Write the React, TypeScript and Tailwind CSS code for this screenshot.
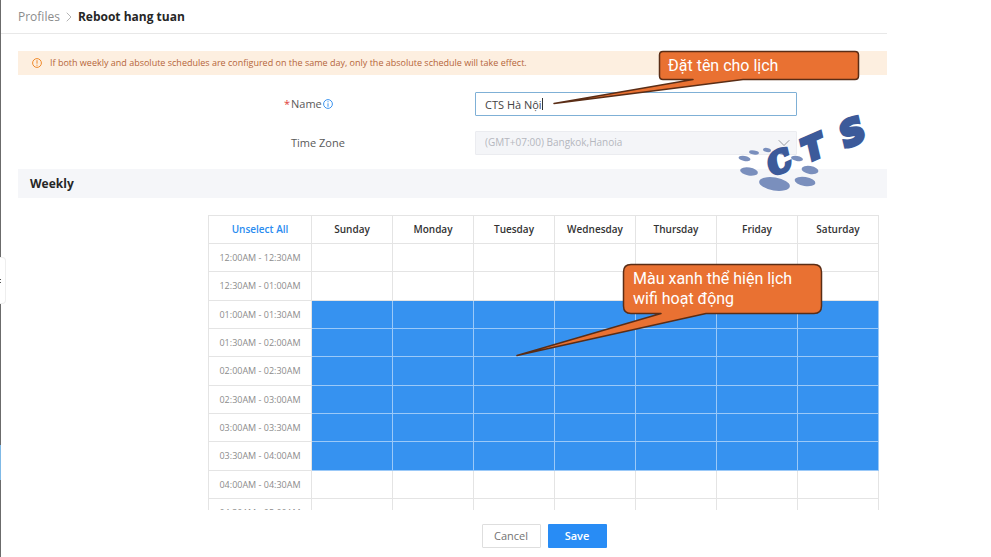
import { ChevronDown, ChevronRight } from "lucide-react";

const days = ["Sunday", "Monday", "Tuesday", "Wednesday", "Thursday", "Friday", "Saturday"];

const slots = [
  { label: "12:00AM - 12:30AM", on: false },
  { label: "12:30AM - 01:00AM", on: false },
  { label: "01:00AM - 01:30AM", on: true },
  { label: "01:30AM - 02:00AM", on: true },
  { label: "02:00AM - 02:30AM", on: true },
  { label: "02:30AM - 03:00AM", on: true },
  { label: "03:00AM - 03:30AM", on: true },
  { label: "03:30AM - 04:00AM", on: true },
  { label: "04:00AM - 04:30AM", on: false },
  { label: "04:30AM - 05:00AM", on: false },
];

function SideRail() {
  return (
    <aside className="relative w-px shrink-0 bg-[#6b6b6b]">
      <button
        aria-label="Collapse menu"
        className="absolute left-0 top-[257px] flex h-[47px] w-[6px] flex-col items-start justify-center gap-[2px] rounded-r-[4px] border border-l-0 border-[#eeeeee] bg-white"
      >
        <span className="h-px w-px bg-[#555555]" />
        <span className="h-px w-px bg-[#555555]" />
      </button>
      <span className="absolute left-0 top-[445px] h-[35px] w-px bg-[#7fb9e6]" />
    </aside>
  );
}

function CalloutName() {
  return (
    <div className="absolute left-[553px] top-[50px] h-[56px] w-[307px]">
      <svg className="absolute inset-0" width="307" height="56" aria-hidden="true">
        <path
          d="M110 1.500H302Q305.500 1.500 305.500 5V26Q305.500 29.500 302 29.500H190L1 53.500L140 29.500H110Q106.500 29.500 106.500 26V5Q106.500 1.500 110 1.500Z"
          fill="#e97132"
          stroke="#5a2d16"
          strokeWidth="1.500"
          strokeLinejoin="round"
        />
      </svg>
      <p className="relative ml-[115px] mt-[6px] font-['Roboto',sans-serif] text-base leading-5 text-white">
        Đặt tên cho lịch
      </p>
    </div>
  );
}

function CalloutWifi() {
  return (
    <div className="absolute left-[516px] top-[263px] h-[94px] w-[307px]">
      <svg className="absolute inset-0" width="307" height="94" aria-hidden="true">
        <path
          d="M115 1.500H298Q305.500 1.500 305.500 9V43Q305.500 50.500 298 50.500H190L1 92.500L145 50.500H115Q107.500 50.500 107.500 43V9Q107.500 1.500 115 1.500Z"
          fill="#e97132"
          stroke="#5a2d16"
          strokeWidth="1.500"
          strokeLinejoin="round"
        />
      </svg>
      <p className="relative ml-[117px] mt-[6px] font-['Roboto',sans-serif] text-base leading-5 text-white">
        Màu xanh thể hiện lịch
        <br />
        wifi hoạt động
      </p>
    </div>
  );
}

function CtsLogo() {
  return (
    <svg
      className="absolute left-[735px] top-[100px]"
      width="156"
      height="94"
      viewBox="0 -10 156 94"
      role="img"
      aria-label="CTS"
    >
      <g fill="#7a8fbd">
        <ellipse cx="39.500" cy="74" rx="15.500" ry="6.500" transform="rotate(9 39.500 74)" />
        <ellipse cx="14" cy="61.500" rx="9" ry="4" transform="rotate(9 14 61.500)" />
        <ellipse cx="9.500" cy="48.500" rx="6" ry="2.500" transform="rotate(9 9.500 48.500)" />
        <ellipse cx="19" cy="42.500" rx="5" ry="2" transform="rotate(9 19 42.500)" />
        <ellipse cx="32" cy="40" rx="4" ry="2" transform="rotate(9 32 40)" />
        <ellipse cx="47" cy="42.500" rx="5" ry="2" transform="rotate(9 47 42.500)" />
        <ellipse cx="62" cy="48.500" rx="6" ry="2.500" transform="rotate(9 62 48.500)" />
        <ellipse cx="75" cy="60" rx="8.500" ry="4" transform="rotate(9 75 60)" />
        <ellipse cx="70" cy="71.500" rx="10.500" ry="4.500" transform="rotate(9 70 71.500)" />
      </g>
      <g
        fill="#3c5a9a"
        stroke="#3c5a9a"
        strokeWidth="4"
        fontFamily="'DejaVu Sans', sans-serif"
        fontWeight="700"
        fontStyle="italic"
        fontSize="29"
      >
        <text x="38" y="66" fontFamily="'DejaVu Serif', serif" transform="rotate(-24 38 66)">C</text>
        <text x="73" y="52" fontSize="31" transform="rotate(-24 73 52)">T</text>
        <text x="111" y="38" fontSize="34" transform="rotate(-24 111 38)">S</text>
      </g>
    </svg>
  );
}

export default function App() {
  return (
    <div className="relative flex h-screen overflow-hidden bg-white font-['Open_Sans',sans-serif] text-xs">
      <SideRail />
      <div className="mr-[104px] flex min-w-0 flex-1 flex-col">
        <nav className="flex h-[34px] shrink-0 items-center gap-px border-b border-[#e8e8e8] pl-[17px]">
          <a href="#profiles" className="text-[#8c8c8c]">Profiles</a>
          <ChevronRight className="size-4 text-[#b5b5b5]" strokeWidth={1.5} />
          <h1 className="font-bold text-[#262626]">Reboot hang tuan</h1>
        </nav>

        <main className="flex min-h-0 flex-1 flex-col overflow-hidden pl-[17px] pt-[17px]">
          <div className="flex h-6 shrink-0 items-center gap-2 bg-[#fdefe0] pl-[14px] text-[9px] text-[#b5653a]">
            <svg width="10" height="10" viewBox="0 0 10 10" fill="none" stroke="#ee8a2c" aria-hidden="true">
              <circle cx="5" cy="5" r="4.400" />
              <path d="M5 2.200V5.700M5 6.700V7.800" />
            </svg>
            If both weekly and absolute schedules are configured on the same day, only the absolute schedule will take effect.
          </div>

          <form className="mt-[17px] flex shrink-0 flex-col gap-[15px] pr-[90px]">
            <div className="flex h-6 items-center">
              <label htmlFor="name" className="flex flex-1 items-center pl-[266px] text-[11px] text-[#595959]">
                <span className="w-[7px] text-[#e0403a]">*</span>
                Name
                <svg className="ml-px" width="10" height="10" viewBox="0 0 10 10" fill="none" stroke="#3b94ef" aria-hidden="true">
                  <circle cx="5" cy="5" r="4.400" />
                  <path d="M5 2.200V3.300M5 4.300V7.800" />
                </svg>
              </label>
              <div className="relative w-[322px]">
                <input
                  id="name"
                  defaultValue="CTS Hà Nội"
                  className="block h-6 w-full rounded-[1px] border border-[#7fb0d6] bg-white px-[9px] text-[11px] text-[#444444] outline-none"
                />
                <span className="absolute left-[67px] top-[6px] h-3 w-px bg-[#333333]" />
              </div>
            </div>
            <div className="flex h-6 items-center">
              <label htmlFor="zone" className="flex-1 pl-[273px] text-[11px] text-[#595959]">Time Zone</label>
              <div className="relative w-[322px]">
                <select
                  id="zone"
                  disabled
                  className="block h-6 w-full appearance-none rounded-[1px] border border-[#ebecf0] bg-[#f4f5f8] px-[9px] text-[10px] text-[#b4b7be] opacity-100"
                >
                  <option>(GMT+07:00) Bangkok,Hanoia</option>
                </select>
                <ChevronDown className="absolute right-[3px] top-[2px] size-5 text-[#85888e]" strokeWidth={1} />
              </div>
            </div>
          </form>

          <h2 className="mt-[14px] flex h-[29px] shrink-0 items-center bg-[#f5f6f9] pl-3 font-bold text-[#262626]">Weekly</h2>

          <div className="mt-[17px] min-h-0 flex-1 overflow-hidden pl-[190px] pr-2">
            <table className="w-full table-fixed border-separate border-spacing-0 text-center">
              <thead>
                <tr>
                  <th className="h-[29px] w-[104px] border border-[#e4e4e4] p-0 text-[10px] font-semibold">
                    <button type="button" className="text-[#2a8cf0]">Unselect All</button>
                  </th>
                  {days.map((day) => (
                    <th key={day} className="border-y border-r border-[#e4e4e4] p-0 text-[10px] font-semibold text-[#333333]">
                      {day}
                    </th>
                  ))}
                </tr>
              </thead>
              <tbody>
                {slots.map((slot, i) => (
                  <tr key={slot.label} className={i % 3 === 1 ? "h-[29px]" : "h-7"}>
                    <th className="border-x border-b border-[#e4e4e4] p-0 text-[9px] font-normal text-[#8c8c8c]">{slot.label}</th>
                    {days.map((day) => (
                      <td
                        key={day}
                        className={
                          slot.on
                            ? "border-b border-r border-white/50 bg-[#3692f0] p-0"
                            : "border-b border-r border-[#e4e4e4] p-0"
                        }
                      />
                    ))}
                  </tr>
                ))}
              </tbody>
            </table>
          </div>
        </main>

        <footer className="flex h-[47px] shrink-0 items-start justify-center gap-[7px] pl-[200px] pt-[14px]">
          <button type="button" className="h-6 w-[59px] rounded-[1px] border border-[#dedede] bg-white text-[11px] text-[#737373]">
            Cancel
          </button>
          <button type="button" className="h-6 w-[59px] rounded-[1px] bg-[#288cf5] text-[11px] font-semibold text-white">
            Save
          </button>
        </footer>
      </div>

      <CtsLogo />
      <CalloutName />
      <CalloutWifi />
    </div>
  );
}
